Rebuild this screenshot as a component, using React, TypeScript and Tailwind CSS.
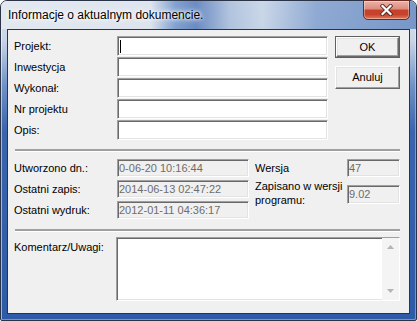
import React from "react";

const sunken =
  "border border-t-[#a0a0a0] border-l-[#a0a0a0] border-b-white border-r-white shadow-[inset_1px_1px_0_#696969,inset_-1px_-1px_0_#e3e3e3]";

function Field({ w, h, children, ro }: { w: string; h: string; children?: React.ReactNode; ro?: boolean }) {
  return (
    <div
      className={`${w} ${h} ${sunken} ${ro ? "bg-[#f0f0f0] text-[#6d6d6d]" : "bg-white text-black"} flex items-center overflow-hidden whitespace-nowrap pl-[1px] text-[11px] leading-[13px]`}
    >
      {children}
    </div>
  );
}

function Row({ label, children }: { label: string; children?: React.ReactNode }) {
  return (
    <div className="flex items-center h-[20px]">
      <div className="w-[103px] text-[11px] leading-[13px]">{label}</div>
      <Field w="w-[211px]" h="h-[20px]">{children}</Field>
    </div>
  );
}

function Btn({ label, def, h }: { label: string; def?: boolean; h: string }) {
  return (
    <div className={`w-[65px] ${h} ${def ? "border border-[#5f5f5f]" : ""} flex`}>
      <div className="flex-1 flex items-center justify-center bg-[#f0f0f0] border border-t-white border-l-white border-b-[#696969] border-r-[#696969] shadow-[inset_-1px_-1px_0_#a0a0a0,inset_1px_1px_0_#e3e3e3] text-[11px] leading-[13px]">
        {label}
      </div>
    </div>
  );
}

function Sep({ mt }: { mt: string }) {
  return <div className={`${mt} ml-[7px] w-[385px] h-[3px] border-t-2 border-[#a0a0a0] bg-white`} />;
}

export default function App() {
  return (
    <div className="w-[417px] h-[321px] bg-white" style={{ fontFamily: '"Liberation Sans", Arial, sans-serif' }}>
      <div className="relative w-[417px] h-[321px] flex flex-col rounded-t-[7px] rounded-b-[2px] border border-[#2b3447] bg-[linear-gradient(180deg,#dfe6ef_0px,#c8d5e6_40px,#6f91c6_85px,#3a65ad_130px,#2e5ba7_100%)] shadow-[inset_1px_1px_0_rgba(255,255,255,0.55),inset_-1px_-1px_0_rgba(255,255,255,0.35)]">
        {/* title bar */}
        <div className="h-[28px] flex items-center pl-[7px] rounded-t-[6px] bg-[linear-gradient(90deg,rgba(228,233,240,0.95)_0%,rgba(222,229,238,0.9)_36%,rgba(120,154,205,0.9)_42%,rgba(95,130,190,0.9)_47%,rgba(170,190,219,0.85)_55%,rgba(198,212,231,0.8)_63%,rgba(130,160,206,0.85)_76%,rgba(110,143,196,0.9)_100%)]">
          <span className="text-[12px] leading-[16px] text-black [text-shadow:0_0_8px_#fff,0_0_5px_#fff,0_0_3px_#fff]">
            Informacje o aktualnym dokumencie.
          </span>
        </div>
        {/* close button */}
        <div className="absolute top-[-1px] right-[6px] w-[47px] h-[20px] rounded-b-[5px] border border-[#6b2a22] bg-[linear-gradient(180deg,#eab3a8_0%,#dd8b7c_45%,#c7412b_50%,#c5432c_75%,#e07d5a_100%)] shadow-[inset_0_0_0_1px_rgba(255,255,255,0.35)] flex items-center justify-center">
          <svg width="13" height="12" viewBox="0 0 13 12">
            <path d="M2.5 2 L10.5 10 M10.5 2 L2.5 10" stroke="#5a2a24" strokeWidth="4" strokeLinecap="square" />
            <path d="M2.5 2 L10.5 10 M10.5 2 L2.5 10" stroke="#ffffff" strokeWidth="2.2" strokeLinecap="square" />
          </svg>
        </div>
        {/* client */}
        <div className="mx-[6px] mb-[6px] flex-1 border border-[#1d355f] bg-[#f0f0f0] text-black flex flex-col">
          {/* section 1 */}
          <div className="flex pt-[6px] pl-[6px]">
            <div className="flex flex-col gap-[1px]">
              <Row label="Projekt:">
                <span className="ml-[1px] w-[1px] h-[13px] bg-black" />
              </Row>
              <Row label="Inwestycja" />
              <Row label="Wykonał:" />
              <Row label="Nr projektu" />
              <Row label="Opis:" />
            </div>
            <div className="ml-[7px] flex flex-col">
              <Btn label="OK" def h="h-[22px]" />
              <div className="mt-[8px]">
                <Btn label="Anuluj" h="h-[23px]" />
              </div>
            </div>
          </div>
          <Sep mt="mt-[9px]" />
          {/* section 2 */}
          <div className="flex pl-[6px] mt-[7px]">
            <div className="flex flex-col gap-[3px]">
              <div className="flex items-center h-[18px]">
                <div className="w-[103px] text-[11px] leading-[13px]">Utworzono dn.:</div>
                <Field w="w-[132px]" h="h-[18px]" ro>0-06-20 10:16:44</Field>
              </div>
              <div className="flex items-center h-[18px]">
                <div className="w-[103px] text-[11px] leading-[13px]">Ostatni zapis:</div>
                <Field w="w-[132px]" h="h-[18px]" ro>2014-06-13 02:47:22</Field>
              </div>
              <div className="flex items-center h-[18px]">
                <div className="w-[103px] text-[11px] leading-[13px]">Ostatni wydruk:</div>
                <Field w="w-[132px]" h="h-[18px]" ro>2012-01-11 04:36:17</Field>
              </div>
            </div>
            <div className="ml-[6px] flex flex-col">
              <div className="flex items-center h-[18px]">
                <div className="w-[92px] text-[11px] leading-[13px]">Wersja</div>
                <Field w="w-[53px]" h="h-[18px]" ro>47</Field>
              </div>
              <div className="flex mt-[2px]">
                <div className="w-[92px] text-[11px] leading-[14px]">
                  Zapisano w wersji
                  <br />
                  programu:
                </div>
                <div className="mt-[6px]">
                  <Field w="w-[53px]" h="h-[19px]" ro>9.02</Field>
                </div>
              </div>
            </div>
          </div>
          <Sep mt="mt-[10px]" />
          {/* section 3 */}
          <div className="flex pl-[6px] mt-[5px]">
            <div className="w-[102px] pt-[3px] text-[11px] leading-[14px]">Komentarz/Uwagi:</div>
            <div className={`w-[284px] h-[64px] ${sunken} bg-white flex justify-end`}>
              <div className="w-[17px] h-full bg-[#f4f4f4] flex flex-col items-center justify-between py-[7px]">
                <svg width="7" height="4" viewBox="0 0 7 4">
                  <path d="M0 4 L3.5 0 L7 4 Z" fill="#b4b4b4" />
                </svg>
                <svg width="7" height="4" viewBox="0 0 7 4">
                  <path d="M0 0 L3.5 4 L7 0 Z" fill="#b4b4b4" />
                </svg>
              </div>
            </div>
          </div>
        </div>
      </div>
    </div>
  );
}
